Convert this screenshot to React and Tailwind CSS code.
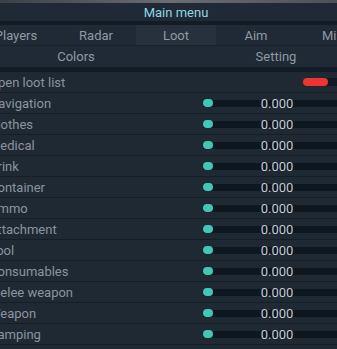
import React from 'react';

const items = ['Navigation', 'Clothes', 'Medical', 'Drink', 'Container', 'Ammo', 'Attachment', 'Tool', 'Consumables', 'Melee weapon', 'Weapon', 'Camping'];
const tabs = ['Players', 'Radar', 'Loot', 'Aim', 'Misc'];

function Row({ label, children }) {
  return (
    <div className="flex items-center h-[21px] bg-[#1f2934] border-b border-[#151d27] pl-[13px] pr-[25px]">
      <span className="flex-1 text-[13px] text-[#8a949e] leading-none">{label}</span>
      {children}
    </div>
  );
}

export default function App() {
  return (
    <div className="w-[337px] h-[349px] overflow-hidden bg-[#141c26]" style={{ fontFamily: 'Roboto, "Open Sans", sans-serif' }}>
      <div className="h-[3px] bg-gradient-to-r from-[#3a4148] via-[#6b6e70] to-[#4d5256]" />
      <div className="ml-[-24px] w-[400px]">
        <div className="h-[18px] bg-[#1f2a36] flex items-center justify-center text-[13px] text-[#8fd6e0] leading-none">Main menu</div>
        <div className="h-[4px] bg-[#131b25]" />
        <div className="grid grid-cols-5 h-[21px] bg-[#1f2a36] border-b border-[#19222c]">
          {tabs.map(t => (
            <div key={t} className={`flex items-center justify-center text-[13px] leading-none text-[#8f99a3] ${t === 'Loot' ? 'bg-[#26313d]' : ''}`}>{t}</div>
          ))}
        </div>
        <div className="grid grid-cols-2 h-[21px] bg-[#1f2a36]">
          <div className="flex items-center justify-center text-[13px] leading-none text-[#8f99a3]">Colors</div>
          <div className="flex items-center justify-center text-[13px] leading-none text-[#8f99a3]">Setting</div>
        </div>
        <div className="h-[5px] bg-[#131b25]" />
        <Row label="Open loot list">
          <div className="w-[48px] h-[8px] bg-[#111923] rounded-full">
            <div className="w-[25px] h-[8px] rounded-full bg-[#f03333]" />
          </div>
        </Row>
        {items.map(l => (
          <Row key={l} label={l}>
            <div className="relative w-[148px] h-[7px] bg-[#0e1620] flex items-center">
              <div className="w-[10px] h-[8px] rounded-full bg-[#3fc8b5]" />
              <span className="absolute inset-0 flex items-center justify-center text-[13px] leading-none text-[#c4cad0]">0.000</span>
            </div>
          </Row>
        ))}
        <div className="h-[10px] bg-[#1f2934]" />
      </div>
    </div>
  );
}
